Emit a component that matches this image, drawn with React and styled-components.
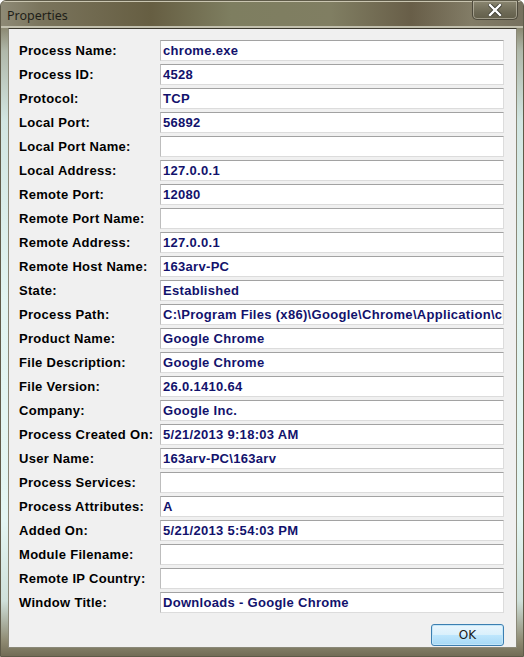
import React from 'react'
import styled, { createGlobalStyle } from 'styled-components'

const GlobalStyle = createGlobalStyle`
    html, body {
        margin: 0;
        padding: 0;
        background: #ffffff;
    }
`

const rows = [
    { label: 'Process Name:', value: 'chrome.exe' },
    { label: 'Process ID:', value: '4528' },
    { label: 'Protocol:', value: 'TCP' },
    { label: 'Local Port:', value: '56892' },
    { label: 'Local Port Name:', value: '' },
    { label: 'Local Address:', value: '127.0.0.1' },
    { label: 'Remote Port:', value: '12080' },
    { label: 'Remote Port Name:', value: '' },
    { label: 'Remote Address:', value: '127.0.0.1' },
    { label: 'Remote Host Name:', value: '163arv-PC' },
    { label: 'State:', value: 'Established' },
    { label: 'Process Path:', value: 'C:\\Program Files (x86)\\Google\\Chrome\\Application\\chrome.exe' },
    { label: 'Product Name:', value: 'Google Chrome' },
    { label: 'File Description:', value: 'Google Chrome' },
    { label: 'File Version:', value: '26.0.1410.64' },
    { label: 'Company:', value: 'Google Inc.' },
    { label: 'Process Created On:', value: '5/21/2013 9:18:03 AM' },
    { label: 'User Name:', value: '163arv-PC\\163arv' },
    { label: 'Process Services:', value: '' },
    { label: 'Process Attributes:', value: 'A' },
    { label: 'Added On:', value: '5/21/2013 5:54:03 PM' },
    { label: 'Module Filename:', value: '' },
    { label: 'Remote IP Country:', value: '' },
    { label: 'Window Title:', value: 'Downloads - Google Chrome' },
]

const App = () => {
    return (
        <>
            <GlobalStyle />
            <Window>
                <TitleBar>
                    <Caption>Properties</Caption>
                    <CloseButton>
                        <svg width="14" height="12" viewBox="0 0 14 12">
                            <path d="M2 1 L12 11 M12 1 L2 11" stroke="#3a3a30" strokeWidth="4" strokeLinecap="square" />
                            <path d="M2 1 L12 11 M12 1 L2 11" stroke="#ffffff" strokeWidth="2.4" strokeLinecap="square" />
                        </svg>
                    </CloseButton>
                </TitleBar>
                <Client>
                    <Rows>
                        {rows.map((row, i) => (
                            <Row key={i}>
                                <Label>{row.label}</Label>
                                <Field>{row.value}</Field>
                            </Row>
                        ))}
                    </Rows>
                    <Footer>
                        <OkButton>OK</OkButton>
                    </Footer>
                </Client>
            </Window>
        </>
    )
}

export default App


const Window = styled.div`
    width: 524px;
    height: 657px;
    box-sizing: border-box;
    display: flex;
    flex-direction: column;
    border: 1px solid #5e5a48;
    border-radius: 6px 6px 0 0;
    overflow: hidden;
    background:
        linear-gradient(180deg,
            #8c8872 0px,
            #8a8770 26px,
            #b0b8aa 50px,
            #d2e6e2 120px,
            #e2f4f0 300px,
            #e4f6f2 520px,
            #cfe0da 600px,
            #8e8a72 640px,
            #6e6852 657px);
`

const TitleBar = styled.div`
    height: 27px;
    flex-shrink: 0;
    display: flex;
    align-items: flex-start;
    justify-content: space-between;
    border-top: 1px solid #c9c5b0;
    box-sizing: border-box;
    background:
        linear-gradient(90deg,
            #8e8a76 0px,
            #7a745c 40px,
            #665e42 150px,
            #7e7e60 230px,
            #807e62 330px,
            #685e48 410px,
            #827c66 470px,
            #76705e 524px);
    box-shadow: inset 0 -2px 0 #c2c0ae;
`

const Caption = styled.div`
    font-family: "Noto Sans", "Open Sans", sans-serif;
    font-size: 12.5px;
    color: #1e1e18;
    padding: 5px 0 0 6px;
`

const CloseButton = styled.div`
    width: 46px;
    height: 19px;
    margin-top: -1px;
    margin-right: 5px;
    box-sizing: border-box;
    border: 1px solid #4e4a3c;
    border-top: none;
    border-radius: 0 0 5px 5px;
    background: linear-gradient(180deg, #8a8670 0%, #6e6a56 60%, #625e4a 100%);
    box-shadow: inset 0 0 0 1px rgba(230, 226, 210, 0.45);
    display: flex;
    align-items: center;
    justify-content: center;
`

const Client = styled.div`
    flex: 1;
    margin: 0 6px 8px 7px;
    background: #f0f0f0;
    border: 1px solid #8a8878;
    border-top-color: #3a382e;
    display: flex;
    flex-direction: column;
    padding: 11px 12px 0 10px;
`

const Rows = styled.div`
    display: flex;
    flex-direction: column;
    gap: 3px;
`

const Row = styled.div`
    display: flex;
    align-items: center;
    height: 21px;
`

const Label = styled.div`
    width: 141px;
    flex-shrink: 0;
    font-family: "Liberation Sans", Arial, sans-serif;
    font-weight: bold;
    font-size: 13px;
    letter-spacing: 0.3px;
    color: #000000;
`

const Field = styled.div`
    flex: 1;
    height: 21px;
    box-sizing: border-box;
    background: #ffffff;
    border: 1px solid #dcdcdc;
    border-top-color: #a2a2a2;
    border-left-color: #bdbdbd;
    padding: 0 0 0 2px;
    line-height: 19px;
    overflow: hidden;
    white-space: nowrap;
    font-family: "Liberation Sans", Arial, sans-serif;
    font-weight: bold;
    font-size: 13px;
    letter-spacing: 0.3px;
    color: #12126c;
`

const Footer = styled.div`
    display: flex;
    justify-content: flex-end;
    margin-top: 11px;
`

const OkButton = styled.button`
    width: 73px;
    height: 22px;
    box-sizing: border-box;
    border: 1px solid #3c7fb1;
    border-radius: 3px;
    background: linear-gradient(180deg, #eaf6fd 0%, #d9f0fc 50%, #bee6fd 51%, #a7d9f5 100%);
    box-shadow: inset 0 0 0 1px #c4e6f8;
    font-family: "DejaVu Sans", "Liberation Sans", sans-serif;
    font-size: 12px;
    color: #1a1a1a;
    padding: 0;
`
